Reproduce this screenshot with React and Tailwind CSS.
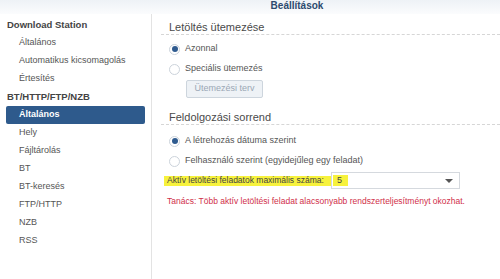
import React from "react";

const font = { fontFamily: '"Liberation Sans", Arial, sans-serif' };

function Radio({ checked, label }) {
  return (
    <div className="h-[20px] flex items-center pl-[8px]">
      <span className="w-[11px] h-[11px] rounded-full border border-[#ccd3db] bg-white flex items-center justify-center">
        {checked && <span className="w-[6px] h-[6px] rounded-full bg-[#2f5b8f]" />}
      </span>
      <span className="ml-[5px] text-[9px] text-[#555]">{label}</span>
    </div>
  );
}

function Heading({ children }) {
  return (
    <div className="h-[15px] flex items-center pl-[8px] border-b border-dashed border-[#d6d6d6] text-[11px] text-[#4a4a4a]">
      {children}
    </div>
  );
}

export default function App() {
  const first = ["Általános", "Automatikus kicsomagolás", "Értesítés"];
  const second = ["Hely", "Fájltárolás", "BT", "BT-keresés", "FTP/HTTP", "NZB", "RSS"];

  return (
    <div style={font} className="w-[500px] h-[279px] bg-white overflow-hidden flex flex-col">
      <div className="h-[14px] shrink-0 bg-gradient-to-b from-[#eef2f6] to-[#fbfcfd] flex justify-center pl-[94px]">
        <span className="text-[10px] font-bold text-[#2c4a6e] leading-[11px]">Beállítások</span>
      </div>
      <div className="flex flex-1">
        <div className="w-[152px] shrink-0 border-r border-[#e3e3e3] pt-[2px] text-[9px] text-[#555]">
          <div className="h-[18px] flex items-center pl-[7px] font-bold text-[#444] text-[9.5px]">Download Station</div>
          {first.map((t) => (
            <div key={t} className="h-[18px] flex items-center pl-[19px]">{t}</div>
          ))}
          <div className="h-[18px] flex items-center pl-[7px] font-bold text-[#444] text-[9.5px]">BT/HTTP/FTP/NZB</div>
          <div className="h-[18px] mx-[6px] rounded-[2px] bg-[#2e5a8c] flex items-center pl-[13px] text-white font-bold">
            Általános
          </div>
          {second.map((t) => (
            <div key={t} className="h-[18px] flex items-center pl-[19px]">{t}</div>
          ))}
        </div>
        <div className="flex-1 pl-[9px] pt-[6px]">
          <Heading>Letöltés ütemezése</Heading>
          <div className="mt-[4px]">
            <Radio checked label="Azonnal" />
            <Radio label="Speciális ütemezés" />
          </div>
          <div className="ml-[25px] mt-[1px] w-[77px] h-[18px] rounded-[2px] border border-[#cdd5dd] bg-[#eef2f6] flex items-center justify-center text-[9px] text-[#9aa7b5]">
            Ütemezési terv
          </div>
          <div className="mt-[12px]">
            <Heading>Feldolgozási sorrend</Heading>
          </div>
          <div className="mt-[6px]">
            <Radio checked label="A létrehozás dátuma szerint" />
            <Radio label="Felhasználó szerint (egyidejűleg egy feladat)" />
          </div>
          <div className="mt-[1px] h-[17px] flex items-center">
            <span className="ml-[3px] w-[167px] h-[10px] bg-[#f7f23c] flex items-center pl-[3px] text-[8.5px] text-[#444]">
              Aktív letöltési feladatok maximális száma:
            </span>
            <div className="w-[129px] h-[17px] border border-[#d5d9de] bg-white flex items-center justify-between pl-[1px] pr-[6px]">
              <span className="h-[11px] w-[15px] bg-[#f7f23c] flex items-center pl-[4px] text-[9px] text-[#444]">5</span>
              <span className="w-0 h-0 border-l-[4px] border-r-[4px] border-t-[4px] border-l-transparent border-r-transparent border-t-[#555]" />
            </div>
          </div>
          <div className="mt-[5px] h-[14px] flex items-center pl-[6px] text-[8.5px] text-[#d0304a]">
            Tanács: Több aktív letöltési feladat alacsonyabb rendszerteljesítményt okozhat.
          </div>
        </div>
      </div>
    </div>
  );
}
